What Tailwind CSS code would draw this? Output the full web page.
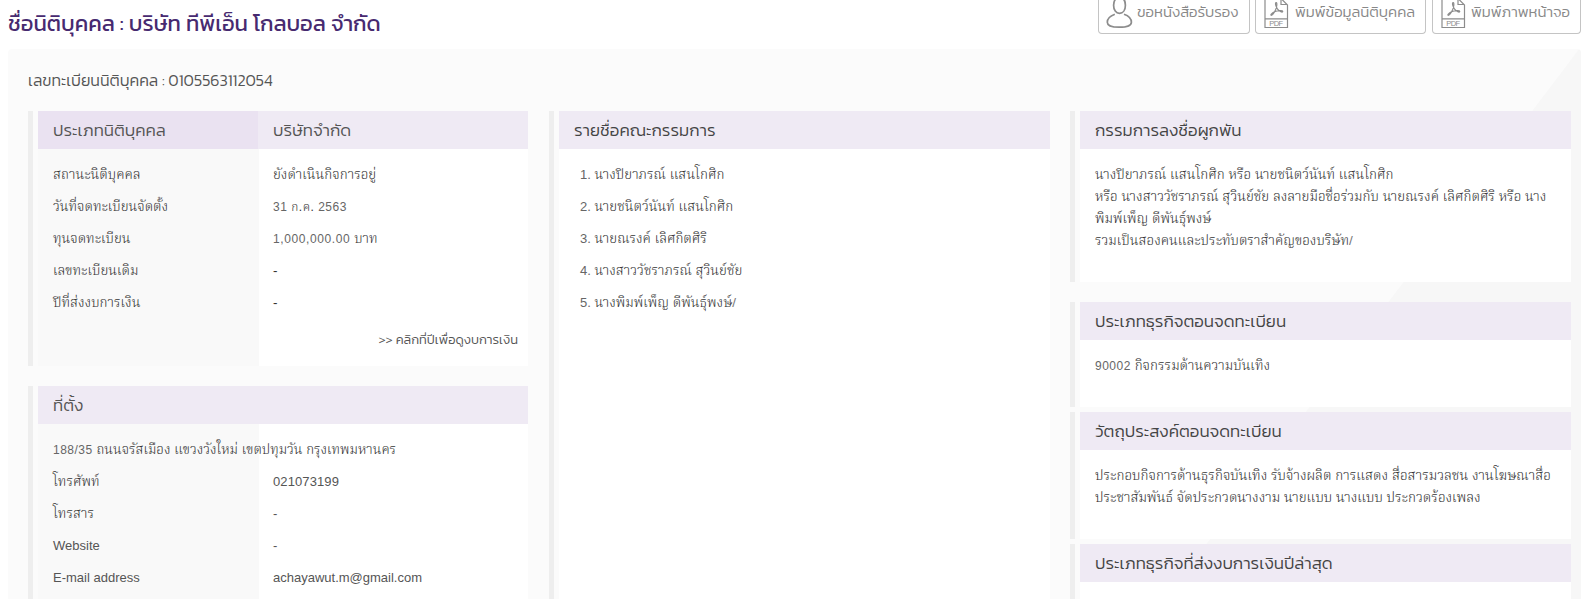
<!DOCTYPE html>
<html lang="th">
<head>
<meta charset="utf-8">
<title>ข้อมูลนิติบุคคล</title>
<script src="https://cdn.jsdelivr.net/npm/@tailwindcss/browser@4"></script>
</head>
<body class="relative h-[599px] overflow-hidden bg-white font-['Kanit','Noto_Sans_Thai',sans-serif] text-[#555]">

<header class="flex h-[49px] items-start justify-between pr-[4px] pl-[8px]">
  <h1 class="mt-[8px] text-[22px] leading-[32px] font-normal whitespace-nowrap text-[#472a70]">ชื่อนิติบุคคล : บริษัท ทีพีเอ็น โกลบอล จำกัด</h1>
  <nav class="flex text-[15px] font-light text-[#888]">
    <a class="flex h-[34px] w-[152px] rounded-b-[4px] border border-t-0 border-[#c4c4c4]">
      <svg class="ml-[7px] h-[30px] w-[27px]" viewBox="0 0 27 30" fill="none" stroke="#8c8c8c" stroke-width="1.7"><path d="M13.500-2.500C9.500-2.500 7.600 1 7.600 5.200C7.600 10 10 13.300 13.500 13.300C17 13.300 19.400 10 19.400 5.200C19.400 1 17.500-2.500 13.500-2.500ZM8.800 14.200C4.500 15.800 1.300 18 1.300 22.200C1.300 25.500 6 27.200 13.200 27.200C20.500 27.200 25.400 25.500 25.400 22.200C25.400 18 22.500 15.800 18 14.200"/></svg>
      <span class="ml-[4px] leading-[24px] whitespace-nowrap">ขอหนังสือรับรอง</span>
    </a>
    <a class="ml-[5px] flex h-[34px] w-[171px] rounded-b-[4px] border border-t-0 border-[#c4c4c4]">
      <svg class="ml-[8px] h-[30px] w-[25px]" viewBox="0 0 25 30" fill="none" stroke="#8c8c8c" stroke-width="1.200"><path d="M1-3V27.500H23.500V5L17-1.500V4.500H23M1 18.800H23.500M12 2.500C10.700 3.300 12.200 7 13.600 9.200C15.500 11.500 18.500 13 18.800 11.500C18.700 10 13.500 10.500 10.500 11.800C8 13 6.200 14.800 7.200 15.300C8.800 15.600 12.200 9.800 12.700 6C13 4 12.800 2.300 12 2.500Z"/><text x="5.200" y="25.800" font-family="Liberation Sans" font-size="7.500" textLength="14" fill="#8c8c8c" stroke="none">PDF</text></svg>
      <span class="ml-[6px] leading-[24px] whitespace-nowrap">พิมพ์ข้อมูลนิติบุคคล</span>
    </a>
    <a class="ml-[6px] flex h-[34px] w-[149px] rounded-b-[4px] border border-t-0 border-[#c4c4c4]">
      <svg class="ml-[8px] h-[30px] w-[25px]" viewBox="0 0 25 30" fill="none" stroke="#8c8c8c" stroke-width="1.200"><path d="M1-3V27.500H23.500V5L17-1.500V4.500H23M1 18.800H23.500M12 2.500C10.700 3.300 12.200 7 13.600 9.200C15.500 11.500 18.500 13 18.800 11.500C18.700 10 13.500 10.500 10.500 11.800C8 13 6.200 14.800 7.200 15.300C8.800 15.600 12.200 9.800 12.700 6C13 4 12.800 2.300 12 2.500Z"/><text x="5.200" y="25.800" font-family="Liberation Sans" font-size="7.500" textLength="14" fill="#8c8c8c" stroke="none">PDF</text></svg>
      <span class="ml-[5px] leading-[24px] whitespace-nowrap">พิมพ์ภาพหน้าจอ</span>
    </a>
  </nav>
</header>

<main class="relative mr-[4px] ml-[8px] h-[550px] overflow-hidden rounded-t-[4px] bg-[#fbfbfb]">
  <svg class="absolute top-0 right-0 h-[550px] w-[418px]" viewBox="0 0 418 550"><path d="M416 0H418V550H2Z" fill="#f7f7f7"/></svg>

  <div class="relative flex h-[62px] pt-[19px] pl-[20px] text-[16px] leading-[24px] font-light">เลขทะเบียนนิติบุคคล : 0105563112054</div>

  <div class="relative flex pl-[20px]">
    <!-- company profile and address -->
    <div class="flex w-[500px] flex-col gap-[20px]">
      <section class="flex h-[255px] gap-[5px]">
        <div class="w-[5px] shrink-0 bg-[#eee]"></div>
        <div class="flex-1 bg-[linear-gradient(to_right,#f9f9f9_221px,#fff_221px)]">
          <div class="grid h-[38px] grid-cols-[220px_1fr] grid-rows-[38px] text-[17px] leading-[39px] font-light"><div class="bg-[#eae2f1] pl-[15px]">ประเภทนิติบุคคล</div><div class="bg-[#efeaf4] pl-[15px]">บริษัทจำกัด</div></div>
          <div class="grid auto-rows-[32px] grid-cols-[220px_1fr] pt-[10px] pl-[15px] font-['Liberation_Sans','Noto_Serif_Thai',sans-serif] text-[13.500px] leading-[32px] font-light text-[#333]">
            <div>สถานะนิติบุคคล</div><div>ยังดำเนินกิจการอยู่</div>
            <div>วันที่จดทะเบียนจัดตั้ง</div><div class="text-[12px] tracking-[0.500px] text-[#666]">31 <span class="text-[#333]">ก.ค.</span> 2563</div>
            <div>ทุนจดทะเบียน</div><div class="text-[12px] tracking-[0.600px] text-[#666]">1,000,000.00 <span class="text-[13.500px] tracking-normal text-[#333]">บาท</span></div>
            <div>เลขทะเบียนเดิม</div><div>-</div>
            <div>ปีที่ส่งงบการเงิน</div><div>-</div>
          </div>
          <div class="pr-[10px] text-right text-[13px] leading-[42px] font-light">&gt;&gt; คลิกที่ปีเพื่อดูงบการเงิน</div>
        </div>
      </section>
      <section class="flex h-[240px] gap-[5px]">
        <div class="w-[5px] shrink-0 bg-[#eee]"></div>
        <div class="flex-1 bg-[linear-gradient(to_right,#f9f9f9_221px,#fff_221px)]">
          <div class="h-[38px] bg-[#efeaf4] pl-[15px] text-[17px] leading-[39px] font-light">ที่ตั้ง</div>
          <div class="grid auto-rows-[32px] grid-cols-[220px_1fr] pt-[10px] pl-[15px] font-['Liberation_Sans','Noto_Serif_Thai',sans-serif] text-[13px] leading-[32px] font-light">
            <div class="col-span-2 text-[13.400px] text-[#333]"><span class="text-[12px] tracking-[0.500px] text-[#666]">188/35</span> ถนนจรัสเมือง แขวงวังใหม่ เขตปทุมวัน กรุงเทพมหานคร</div>
            <div class="text-[13.500px] text-[#333]">โทรศัพท์</div><div class="tracking-[0.100px]">021073199</div>
            <div class="text-[13.500px] text-[#333]">โทรสาร</div><div>-</div>
            <div>Website</div><div>-</div>
            <div>E-mail address</div><div>achayawut.m@gmail.com</div>
          </div>
        </div>
      </section>
    </div>

    <!-- directors -->
    <section class="ml-[21px] flex h-[515px] w-[501px] gap-[5px]">
      <div class="w-[5px] shrink-0 bg-[#eee]"></div>
      <div class="flex-1 bg-white">
        <div class="h-[38px] bg-[#efeaf4] pl-[15px] text-[17px] leading-[39px] font-light text-[#444]">รายชื่อคณะกรรมการ</div>
        <ol class="pt-[10px] pl-[21px] font-['Liberation_Sans','Noto_Serif_Thai',sans-serif] text-[13.500px] leading-[32px] font-light text-[#333]">
          <li><span class="text-[13px] text-[#666]">1.</span> นางปิยาภรณ์ แสนโกศิก</li>
          <li><span class="text-[13px] text-[#666]">2.</span> นายชนิตว์นันท์ แสนโกศิก</li>
          <li><span class="text-[13px] text-[#666]">3.</span> นายณรงค์ เลิศกิตศิริ</li>
          <li><span class="text-[13px] text-[#666]">4.</span> นางสาววัชราภรณ์ สุวินย์ชัย</li>
          <li><span class="text-[13px] text-[#666]">5.</span> นางพิมพ์เพ็ญ ดีพันธุ์พงษ์<span class="text-[#777]">/</span></li>
        </ol>
      </div>
    </section>

    <!-- signing authority and business type -->
    <div class="ml-[20px] w-[501px]">
      <section class="mb-[20px] flex h-[171px] gap-[5px]">
        <div class="w-[5px] shrink-0 bg-[#eee]"></div>
        <div class="flex-1 bg-white">
          <div class="h-[38px] bg-[#efeaf4] pl-[15px] text-[17px] leading-[39px] font-light text-[#444]">กรรมการลงชื่อผูกพัน</div>
          <div class="pt-[15px] pl-[15px] font-['Liberation_Sans','Noto_Serif_Thai',sans-serif] text-[13.500px] leading-[22px] font-light whitespace-nowrap text-[#333]">นางปิยาภรณ์ แสนโกศิก หรือ นายชนิตว์นันท์ แสนโกศิก<br>หรือ นางสาววัชราภรณ์ สุวินย์ชัย ลงลายมือชื่อร่วมกับ นายณรงค์ เลิศกิตศิริ หรือ นาง<br>พิมพ์เพ็ญ ดีพันธุ์พงษ์<br>รวมเป็นสองคนและประทับตราสำคัญของบริษัท<span class="text-[#777]">/</span></div>
        </div>
      </section>
      <section class="mb-[5px] flex h-[105px] gap-[5px]">
        <div class="w-[5px] shrink-0 bg-[#eee]"></div>
        <div class="flex-1 bg-white">
          <div class="h-[38px] bg-[#efeaf4] pl-[15px] text-[17px] leading-[39px] font-light text-[#444]">ประเภทธุรกิจตอนจดทะเบียน</div>
          <div class="pt-[15px] pl-[15px] font-['Liberation_Sans','Noto_Serif_Thai',sans-serif] text-[13.500px] leading-[22px] font-light text-[#333]"><span class="text-[12px] tracking-[0.500px] text-[#666]">90002</span> กิจกรรมด้านความบันเทิง</div>
        </div>
      </section>
      <section class="mb-[5px] flex h-[127px] gap-[5px]">
        <div class="w-[5px] shrink-0 bg-[#eee]"></div>
        <div class="flex-1 bg-white">
          <div class="h-[38px] bg-[#efeaf4] pl-[15px] text-[17px] leading-[39px] font-light text-[#444]">วัตถุประสงค์ตอนจดทะเบียน</div>
          <div class="pt-[15px] pl-[15px] font-['Liberation_Sans','Noto_Serif_Thai',sans-serif] text-[13.560px] leading-[22px] font-light whitespace-nowrap text-[#333]">ประกอบกิจการด้านธุรกิจบันเทิง รับจ้างผลิต การแสดง สื่อสารมวลชน งานโฆษณาสื่อ<br>ประชาสัมพันธ์ จัดประกวดนางงาม นายแบบ นางแบบ ประกวดร้องเพลง</div>
        </div>
      </section>
      <section class="flex h-[80px] gap-[5px]">
        <div class="w-[5px] shrink-0 bg-[#eee]"></div>
        <div class="flex-1 bg-white">
          <div class="h-[38px] bg-[#efeaf4] pl-[15px] text-[17px] leading-[39px] font-light text-[#444]">ประเภทธุรกิจที่ส่งงบการเงินปีล่าสุด</div>
        </div>
      </section>
    </div>
  </div>
</main>
</body>
</html>
